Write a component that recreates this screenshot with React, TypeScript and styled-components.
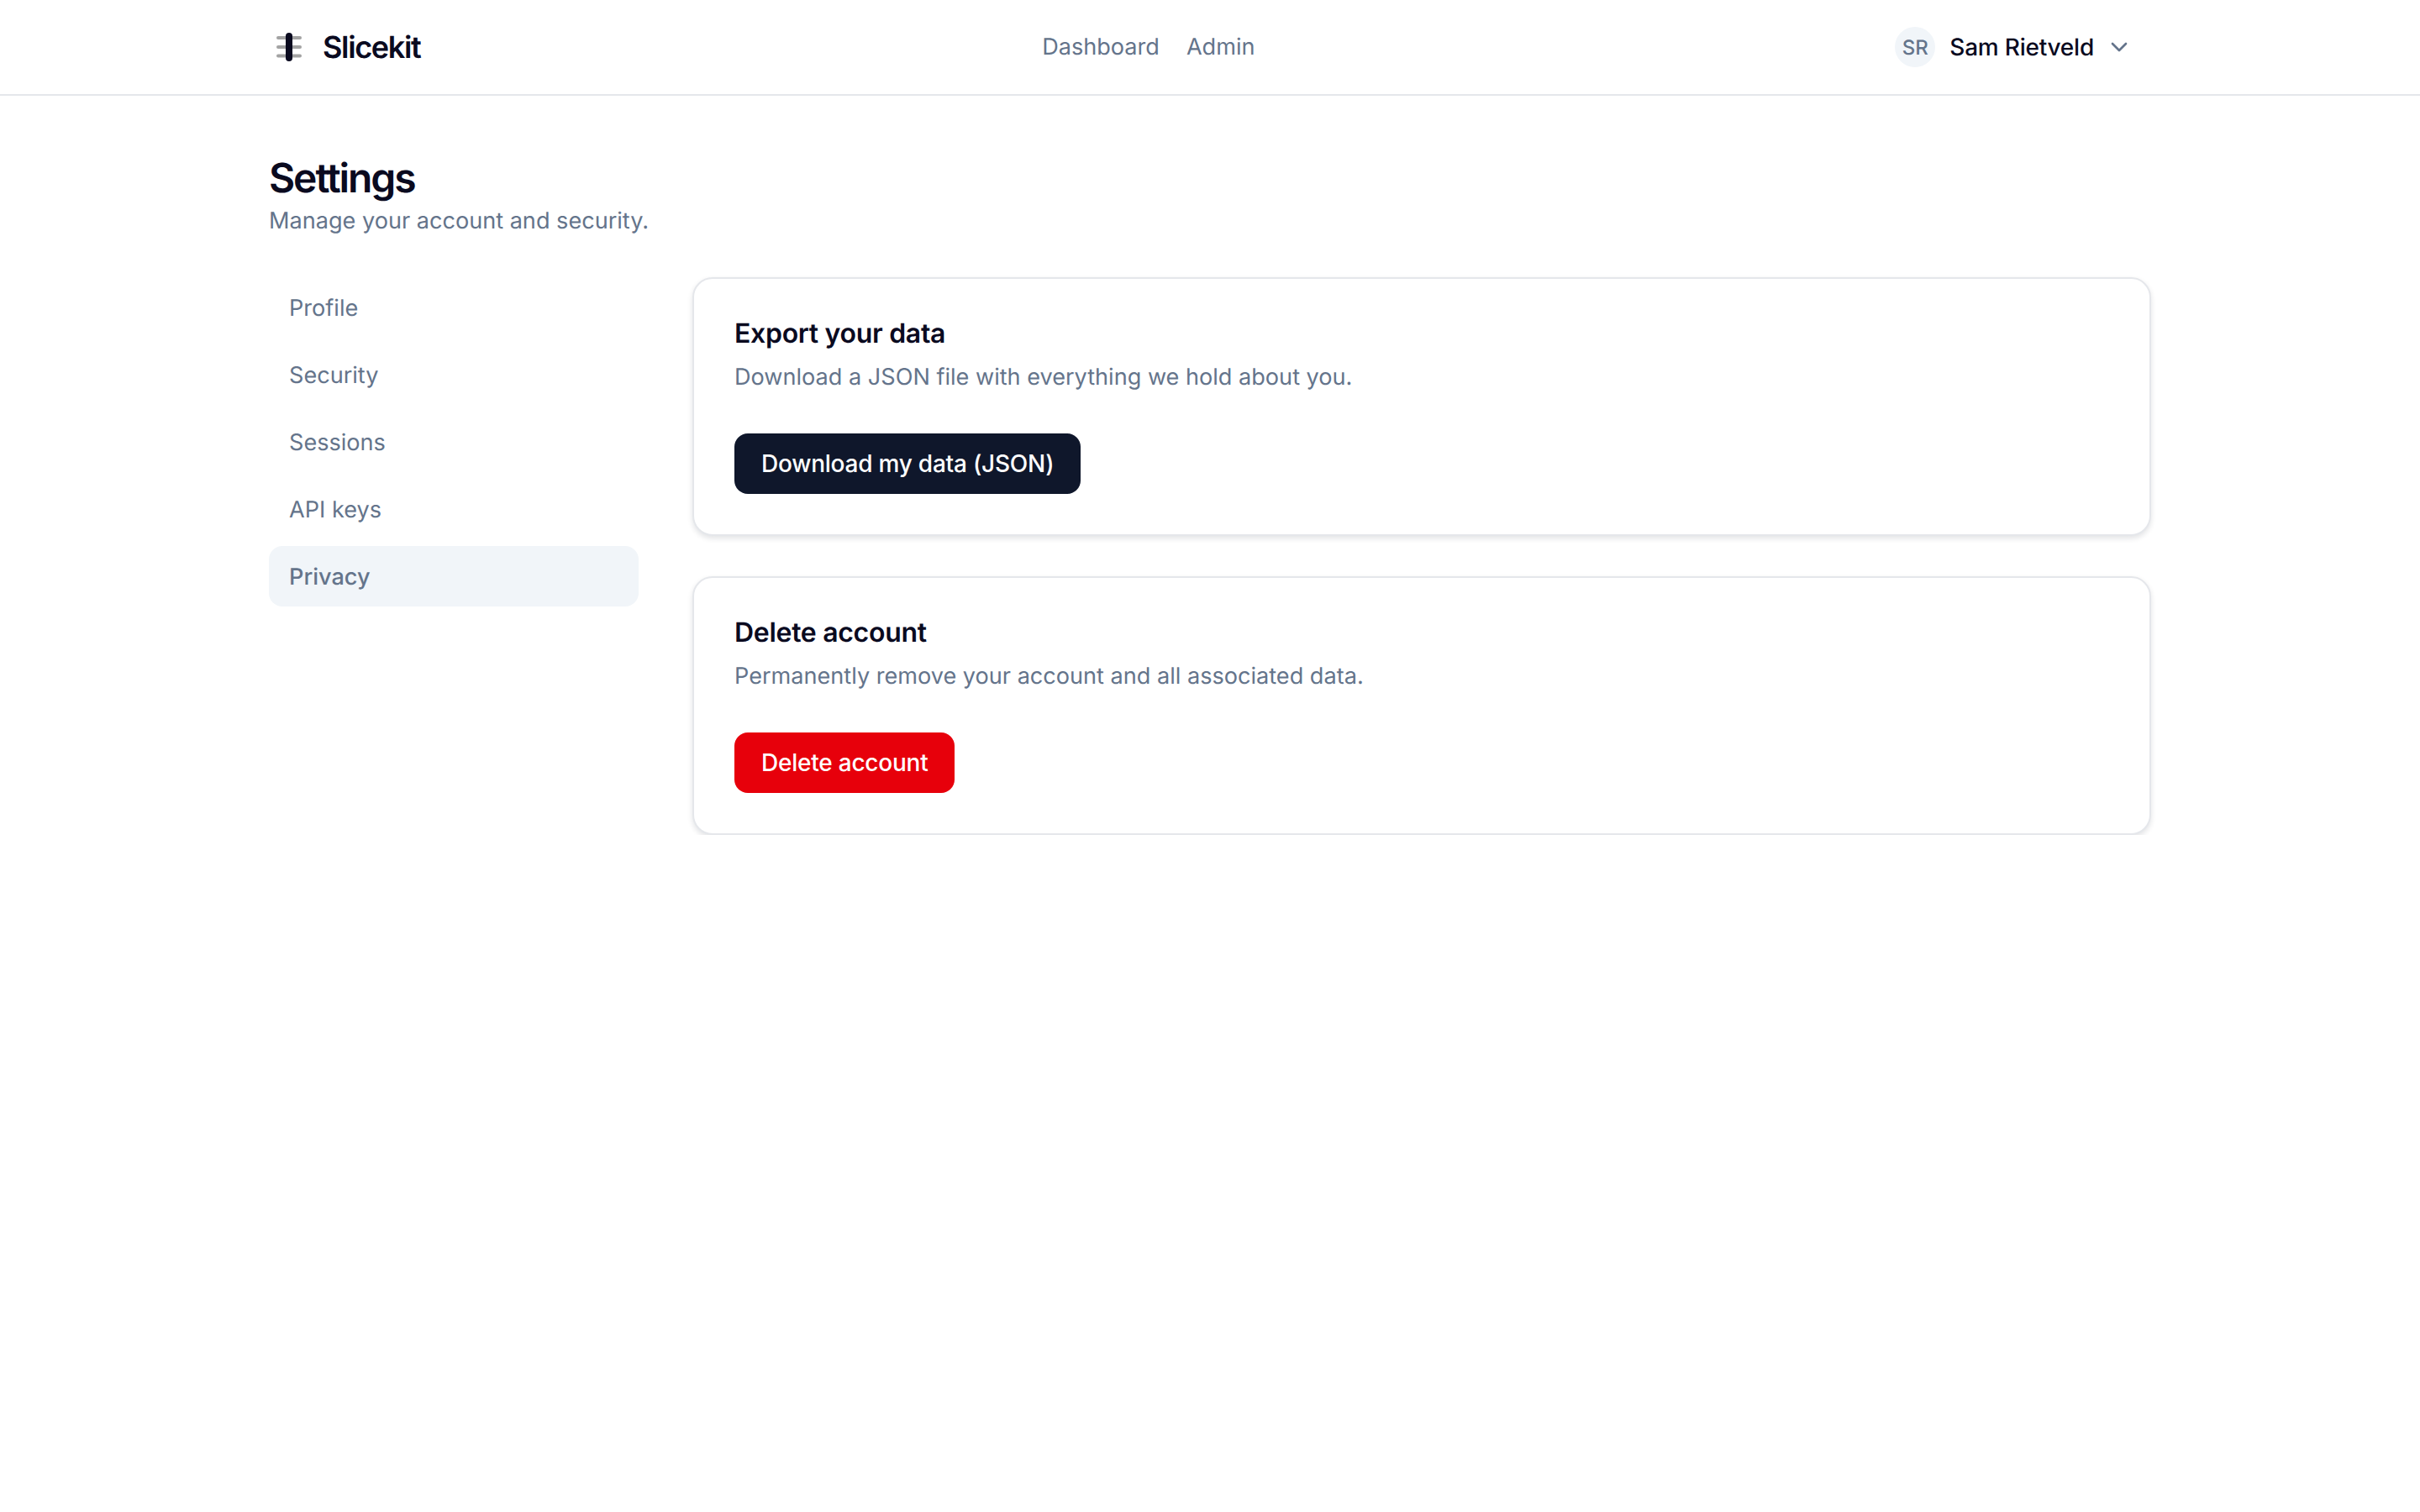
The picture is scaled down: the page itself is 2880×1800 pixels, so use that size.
import React, { FC } from "react";
import styled, { createGlobalStyle } from "styled-components";
import { ChevronDown } from "lucide-react";

const GlobalStyle = createGlobalStyle`
  html, body {
    margin: 0;
    background: #ffffff;
    font-family: Inter, "Liberation Sans", sans-serif;
    color: #0a0a1f;
    text-rendering: geometricPrecision;
  }
`;

const Header = styled.header`
  height: 112px;
  border-bottom: 2px solid #e5e7eb;
`;

const HeaderInner = styled.div`
  width: 2240px;
  height: 100%;
  margin: 0 auto;
  display: flex;
  align-items: center;
  justify-content: space-between;
`;

const Brand = styled.div`
  display: flex;
  align-items: center;
  gap: 25px;
  padding-left: 9px;
  font-size: 36px;
  font-weight: 600;
  letter-spacing: -1.35px;
`;

const TopNav = styled.nav`
  display: flex;
  gap: 32px;
`;

const TopLink = styled.a`
  font-size: 27.1px;
  line-height: 40px;
  color: #64748b;
`;

const UserMenu = styled.div`
  display: flex;
  align-items: center;
  padding: 0 22px;
  color: #0a0a1f;
  font-size: 28px;
  font-weight: 450;
  letter-spacing: -0.23px;
`;

const Avatar = styled.span`
  width: 48px;
  height: 48px;
  border-radius: 50%;
  background: #f1f5f9;
  color: #64748b;
  font-size: 24px;
  font-weight: 500;
  letter-spacing: 0;
  display: flex;
  align-items: center;
  justify-content: center;
  margin-right: 17px;
`;

const Chevron = styled(ChevronDown)`
  width: 32px;
  height: 32px;
  margin-left: 14px;
  color: #64748b;
`;

const Page = styled.main`
  width: 2240px;
  margin: 0 auto;
  padding-top: 66px;
`;

const Title = styled.h1`
  margin: 0;
  font-size: 48px;
  line-height: 63px;
  font-weight: 600;
  letter-spacing: -2.1px;
`;

const Subtitle = styled.p`
  margin: 0;
  font-size: 27.1px;
  line-height: 40px;
  color: #64748b;
`;

const Columns = styled.div`
  display: grid;
  grid-template-columns: 440px 1fr;
  gap: 64px;
  margin-top: 47px;
`;

const SideNav = styled.nav`
  display: flex;
  flex-direction: column;
  gap: 8px;
`;

const SideItem = styled.a<{ $active?: boolean }>`
  height: 72px;
  padding: 0 24px;
  border-radius: 16px;
  display: flex;
  align-items: center;
  font-size: 27.1px;
  font-weight: ${(p) => (p.$active ? 500 : 400)};
  color: #64748b;
  background: ${(p) => (p.$active ? "#f1f5f9" : "transparent")};
`;

const Cards = styled.div`
  display: flex;
  flex-direction: column;
  gap: 48px;
`;

const Card = styled.section`
  border: 2px solid #e5e7eb;
  border-radius: 24px;
  padding: 48px;
  background: #ffffff;
  box-shadow: 0 3px 6px rgba(15, 23, 42, 0.12);
`;

const CardTitle = styled.h2`
  margin: 0;
  font-size: 32px;
  line-height: 33px;
  font-weight: 600;
  letter-spacing: -0.3px;
`;

const CardText = styled.p`
  margin: 16px 0 0;
  font-size: 27.1px;
  line-height: 40px;
  color: #64748b;
`;

const ActionButton = styled.button<{ $danger?: boolean }>`
  display: block;
  margin-top: 47px;
  height: 72px;
  padding: 0 32px;
  border: 0;
  border-radius: 16px;
  font-family: inherit;
  font-size: 28px;
  font-weight: 450;
  letter-spacing: -0.23px;
  color: #ffffff;
  background: ${(p) => (p.$danger ? "#e7000b" : "#0f172b")};
`;

const sideItems = ["Profile", "Security", "Sessions", "API keys", "Privacy"];

const Logo: FC = () => (
  <svg width="30" height="34" viewBox="0 0 30 34" fill="none">
    <g stroke="#a3a3a3" strokeWidth="4" strokeLinecap="round">
      <path d="M2 6H28" />
      <path d="M2 17H28" />
      <path d="M2 27.5H28" />
    </g>
    <rect x="11" y="0" width="8" height="34" rx="4" fill="#0a0a1f" />
  </svg>
);

export default function App() {
  return (
    <>
      <GlobalStyle />
      <Header>
        <HeaderInner>
          <Brand>
            <Logo />
            Slicekit
          </Brand>
          <TopNav>
            <TopLink>Dashboard</TopLink>
            <TopLink>Admin</TopLink>
          </TopNav>
          <UserMenu>
            <Avatar>SR</Avatar>
            Sam Rietveld
            <Chevron />
          </UserMenu>
        </HeaderInner>
      </Header>
      <Page>
        <Title>Settings</Title>
        <Subtitle>Manage your account and security.</Subtitle>
        <Columns>
          <SideNav>
            {sideItems.map((item) => (
              <SideItem key={item} $active={item === "Privacy"}>
                {item}
              </SideItem>
            ))}
          </SideNav>
          <Cards>
            <Card>
              <CardTitle>Export your data</CardTitle>
              <CardText>
                Download a JSON file with everything we hold about you.
              </CardText>
              <ActionButton>Download my data (JSON)</ActionButton>
            </Card>
            <Card>
              <CardTitle>Delete account</CardTitle>
              <CardText>
                Permanently remove your account and all associated data.
              </CardText>
              <ActionButton $danger>Delete account</ActionButton>
            </Card>
          </Cards>
        </Columns>
      </Page>
    </>
  );
}
